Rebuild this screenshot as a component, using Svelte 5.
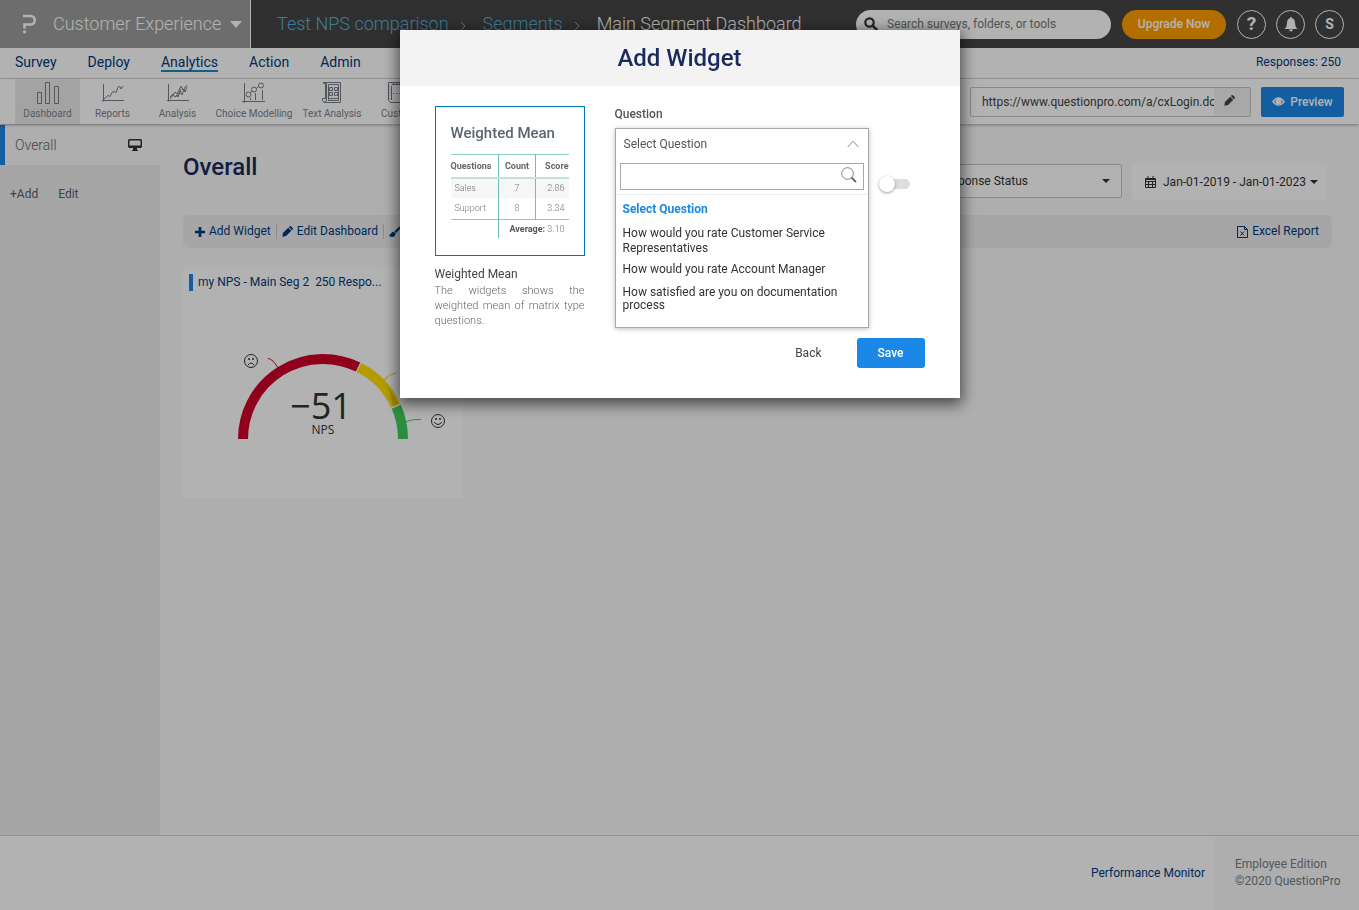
<script>
  const navItems = ['Survey', 'Deploy', 'Analytics', 'Action', 'Admin'];
  const questions = [
    'How would you rate Customer Service Representatives',
    'How would you rate Account Manager',
    'How satisfied are you on documentation process'
  ];
  let search = $state('');
  let enabled = $state(false);
  let url = $state('https://www.questionpro.com/a/cxLogin.do?tt=cx');
</script>

{#snippet pencil(size)}
  <svg class="solid" width={size} height={size} viewBox="0 0 12 12" aria-hidden="true">
    <path d="M1 7.600 6.800 1.800 10.200 5.200 4.400 11 0.400 11.600ZM7.500 1.100 8.300.3Q9-.2 9.700.4L11.600 2.300Q12.200 3 11.700 3.700L10.900 4.500Z" />
  </svg>
{/snippet}

<div class="page">
  <header class="top">
    <button class="product">
      <svg class="logo" width="14" height="20" viewBox="0 0 14 20" aria-hidden="true">
        <path d="M1 2H8.500A3.500 3.500 0 0 1 8.500 10.500H2.500V14.500" fill="none" stroke="currentColor" stroke-width="2.600" />
        <circle cx="2.500" cy="17.800" r="1.600" fill="currentColor" />
      </svg>
      <span>Customer Experience</span>
      <svg width="12" height="7" viewBox="0 0 12 7" aria-hidden="true"><path d="M0 0H12L6 7Z" fill="currentColor" /></svg>
    </button>
    <nav class="crumbs" aria-label="Breadcrumb">
      <a href="#nps">Test NPS comparison</a>
      <svg width="6" height="10" viewBox="0 0 6 10" aria-hidden="true"><path d="M1 1 5 5 1 9" /></svg>
      <a href="#segments">Segments</a>
      <svg width="6" height="10" viewBox="0 0 6 10" aria-hidden="true"><path d="M1 1 5 5 1 9" /></svg>
      <span>Main Segment Dashboard</span>
    </nav>
    <label class="search">
      <svg width="14" height="14" viewBox="0 0 14 14" aria-hidden="true">
        <circle cx="5.500" cy="5.500" r="4.200" fill="none" stroke="currentColor" stroke-width="2.200" />
        <path d="M8.600 8.600 12.600 12.600" stroke="currentColor" stroke-width="2.600" stroke-linecap="round" />
      </svg>
      <input type="search" placeholder="Search surveys, folders, or tools" aria-label="Search" />
    </label>
    <button class="upgrade">Upgrade Now</button>
    <button class="round help" aria-label="Help">?</button>
    <button class="round" aria-label="Notifications">
      <svg width="14" height="15" viewBox="0 0 14 15" aria-hidden="true">
        <path fill="currentColor" d="M7 0Q8 0 8 1.200Q11 2 11 6Q11 10 13.500 12H.5Q3 10 3 6Q3 2 6 1.200Q6 0 7 0ZM5 12.600H9Q8.800 14.500 7 14.500T5 12.600Z" />
      </svg>
    </button>
    <button class="round" aria-label="Account">S</button>
  </header>

  <nav class="main-nav">
    {#each navItems as item}
      <a href="#{item}" class:active={item === 'Analytics'}>{item}</a>
    {/each}
    <span class="responses">Responses: 250</span>
  </nav>

  <div class="tools">
    <a class="tool current" href="#dashboard">
      <svg width="26" height="24" viewBox="0 0 26 24" aria-hidden="true"><path d="M2.500 12.500H6.500V23.500H2.500ZM10.500 2.500H14.500V23.500H10.500ZM19.500 6.500H23.500V23.500H19.500Z" /></svg>
      <span>Dashboard</span>
    </a>
    <a class="tool" href="#reports">
      <svg width="26" height="24" viewBox="0 0 26 24" aria-hidden="true"><path d="M3.500 4V21.500M2 20.500H24M4 19 8 15.500 10 16.500 12 12.500 14 11.500 16 12.500 18 7 20 6.500 21 9 23 6" /></svg>
      <span>Reports</span>
    </a>
    <a class="tool" href="#analysis">
      <svg width="26" height="24" viewBox="0 0 26 24" aria-hidden="true"><path d="M3.500 4V21.500M2 20.500H24M5 19 8 15 10 12 12 14 16 6 18 10 22 5M5 17 8 14 10 17 13 15 15 11 17 15 19 9 20 12 22 7M11 15 13 17 16 9" /></svg>
      <span>Analysis</span>
    </a>
    <a class="tool choice" href="#choice">
      <svg width="26" height="24" viewBox="0 0 26 24" aria-hidden="true"><path d="M3.500 3V23M1 21.500H24M9.500 18V20M14.500 13V20M21.500 10V20M9.500 12.500 11.500 11M15 9 18 6" /><circle cx="7.500" cy="14.500" r="2.500" /><circle cx="13" cy="9.500" r="2.500" /><circle cx="20" cy="5.500" r="2.500" /></svg>
      <span>Choice Modelling</span>
    </a>
    <a class="tool text" href="#text">
      <svg width="26" height="24" viewBox="0 0 26 24" aria-hidden="true"><path d="M7.500 2.500H21.500V22.500H6Q3.500 22.500 3.500 20V18.500H6.500V3Q4 4 4 2.500H7.500V20Q7.500 22 5.500 22M9.500 4.500H19.500V20.500H9.500ZM10.500 7.500H13.500V10.500H10.500ZM15.500 7.500H18.500V10.500H15.500ZM10.500 12.500H13.500V15.500H10.500ZM15.500 12.500H18.500V15.500H15.500ZM10 18.500H19" /></svg>
      <span>Text Analysis</span>
    </a>
    <a class="tool" href="#custom">
      <svg width="26" height="24" viewBox="0 0 26 24" aria-hidden="true"><path d="M2.500 2.500H24.500V22.500H4.500L2.500 20.500V2.500M5.500 4.500H22M5.500 6V20" /><path stroke-dasharray="1 2" d="M3 6V20M7 13.500H20M7 3.500H23" /></svg>
      <span>Custom</span>
    </a>
    <div class="link-box">
      <input aria-label="Survey link" bind:value={url} />
      <button aria-label="Edit link">{@render pencil(11)}</button>
    </div>
    <button class="preview">
      <svg width="13" height="9" viewBox="0 0 12 8" aria-hidden="true"><path fill="currentColor" fill-rule="evenodd" d="M0 4Q6-4 12 4Q6 12 0 4ZM2 4Q3 6.200 6 6.600Q9 6.200 10 4Q9 2.300 8 1.900A2.800 2.800 0 1 1 4 1.900Q3 2.300 2 4Z" /></svg>
      Preview
    </button>
  </div>

  <div class="body">
    <aside>
      <a class="side-current" href="#overall">
        <span>Overall</span>
        <svg width="14" height="12" viewBox="0 0 14 12" aria-hidden="true"><path fill="currentColor" fill-rule="evenodd" d="M1 0H13L14 1V8L13 9H9V11H10V12H4V11H5V9H1L0 8V1ZM1.500 1.500V6.500H12.500V1.500Z" /></svg>
      </a>
      <div class="side-actions"><a href="#add">+Add</a><a href="#edit">Edit</a></div>
    </aside>

    <main>
      <div class="title-row">
        <h1>Overall</h1>
        <button class="status">Response Status <i class="caret"></i></button>
        <button class="dates">
          <svg width="11" height="12" viewBox="0 0 11 12" aria-hidden="true"><path fill="none" stroke="currentColor" d="M.5 2.500H10.500V11.500H.5ZM.5 3.500H10.500M.5 5.500H10.500M.5 8.500H10.500M3.500 5V11M7.500 5V11M3 0V3M8 0V3" /></svg>
          <span>Jan-01-2019 - Jan-01-2023</span> <i class="caret"></i>
        </button>
      </div>

      <div class="actions">
        <button><svg class="solid" width="10" height="10" viewBox="0 0 10 10" aria-hidden="true"><path d="M3.700 0H6.300V3.700H10V6.300H6.300V10H3.700V6.300H0V3.700H3.700Z" /></svg>Add Widget</button>
        <button>{@render pencil(11)}Edit Dashboard</button>
        <button><svg class="solid" width="12" height="11" viewBox="0 0 12 11" aria-hidden="true"><path d="M11.600.3Q12.400 1 11.500 2.300L7.300 7 5.500 5.300 10.300.8Q11 0 11.600.3ZM5 5.800 6.700 7.500Q6.500 11 2.800 11 .7 11 0 8.700 1.300 9 2 7.500 3 5.500 5 5.800Z" /></svg>Theme</button>
        <button class="excel"><svg width="11" height="12" viewBox="0 0 11 12" aria-hidden="true"><path fill="none" stroke="currentColor" d="M.5.5H7.500L10.500 3.500V11.500H.5ZM7.500.5V3.500H10.500M3.500 5.500 7 9.500M7 5.500 3.500 9.500" /></svg>Excel Report</button>
      </div>

      <section class="card">
        <h2>my NPS - Main Seg 2&nbsp; 250 Respo...</h2>
        <svg class="gauge" viewBox="0 0 280 200" role="img" aria-label="NPS −51">
          <g fill="none" stroke-width="10">
            <path stroke="#cc0029" d="M60 138A80 80 0 0 1 175 66" />
            <path stroke="#ffe100" d="M176 66.500A80 80 0 0 1 212.700 104.500" />
            <path stroke="#3ecb5b" d="M213.300 105.800A80 80 0 0 1 220 138" />
          </g>
          <path fill="#e8bd00" d="M206 87 215.600 103 210 105.500Z" />
          <g fill="none" stroke-width="1">
            <path stroke="#cc0029" d="M85 57.500Q90 58 95 67" />
            <path stroke="#e5c500" d="M201 79Q206 73 213 72" />
            <path stroke="#3ecb5b" d="M223 120.500Q230 118 238 118.500" />
            <g stroke="#333">
              <circle cx="68" cy="60" r="6.500" /><path d="M65 64Q68 60 71 64" />
              <circle cx="255" cy="120" r="6.500" /><path d="M251 121Q255 126 259 121" />
            </g>
          </g>
          <g fill="#333"><circle cx="66" cy="58" r="1" /><circle cx="70" cy="58" r="1" /><circle cx="253" cy="118" r="1" /><circle cx="257" cy="118" r="1" /></g>
          <text class="score" x="138" y="118">−51</text>
          <text class="unit" x="140" y="133">NPS</text>
        </svg>
      </section>
    </main>
  </div>

  <footer>
    <a href="#monitor">Performance Monitor</a>
    <div>Employee Edition<br />©2020 QuestionPro</div>
  </footer>
</div>

<div class="overlay">
  <div class="modal" role="dialog" aria-modal="true" aria-labelledby="modal-title">
    <h2 id="modal-title">Add Widget</h2>
    <div class="modal-body">
      <div class="widget">
        <div class="thumb">
          <h3>Weighted Mean</h3>
          <table>
            <thead><tr><th>Questions</th><th>Count</th><th>Score</th></tr></thead>
            <tbody>
              <tr class="shade"><td>Sales</td><td>7</td><td>2.86</td></tr>
              <tr><td>Support</td><td>8</td><td>3.34</td></tr>
            </tbody>
            <tfoot><tr><td></td><td colspan="2"><b>Average:</b> 3.10</td></tr></tfoot>
          </table>
        </div>
        <h4>Weighted Mean</h4>
        <p>The widgets shows the weighted mean of matrix type questions.</p>
      </div>
      <div class="form">
        <label class="caption" for="question">Question</label>
        <div class="field">
          <div class="dropdown">
            <button id="question" class="chosen" aria-expanded="true">
              Select Question
              <svg width="12" height="8" viewBox="0 0 12 8" aria-hidden="true"><path d="M.7 7 6 1.200 11.300 7" fill="none" stroke="#888" /></svg>
            </button>
            <label class="find">
              <input bind:value={search} aria-label="Search questions" />
              <svg width="16" height="16" viewBox="0 0 16 16" aria-hidden="true"><circle cx="6.500" cy="6.500" r="5.800" fill="none" stroke="#777" stroke-width=".9" /><path d="M10.500 10.500 15 15" stroke="#444" stroke-width="1.600" /></svg>
            </label>
            <ul>
              <li><button class="picked">Select Question</button></li>
              {#each questions as q}
                <li><button>{q}</button></li>
              {/each}
            </ul>
          </div>
          <label class="switch">
            <input type="checkbox" bind:checked={enabled} aria-label="Enable option" />
            <span></span>
          </label>
        </div>
        <div class="buttons">
          <button class="back">Back</button>
          <button class="save">Save</button>
        </div>
      </div>
    </div>
  </div>
</div>

<style>
  :global(body) { margin: 0; }
  :global(*) { box-sizing: border-box; }
  .page, .overlay { font-family: Roboto, "Open Sans", sans-serif; font-size: 12px; line-height: 16px; }
  button, input { font: inherit; color: inherit; border: 0; background: none; padding: 0; margin: 0; }
  a { color: inherit; text-decoration: none; }
  h1, h2, h3, h4, p, ul { margin: 0; padding: 0; font-weight: 400; }
  svg { flex: none; }
  .solid { fill: currentColor; }
  .page { min-height: 100vh; display: flex; flex-direction: column; background: #f9f9f9; color: #003a7d; }

  .top { display: flex; align-items: center; height: 48px; padding-right: 15px; background: #454545; color: #fff; }
  .product { display: flex; align-items: center; align-self: stretch; width: 251px; padding: 0 8px 0 22px; background: #9d9d9d; border-right: 1px solid #fff; font-size: 18px; font-weight: 300; }
  .product .logo { margin-right: 17px; }
  .product span { flex: 1; text-align: left; }
  .crumbs { display: flex; align-items: center; flex: 1; margin-left: 26px; font-size: 18px; font-weight: 300; white-space: nowrap; }
  .crumbs a { color: #5eb1dc; }
  .crumbs svg { margin: 3px 17px 0 11px; fill: none; stroke: #aaa; }
  .search { display: flex; align-items: center; gap: 9px; width: 255px; height: 29px; padding: 0 14px 0 8px; border-radius: 15px; background: #fff; color: #333; }
  .search input { flex: 1; min-width: 0; outline: 0; }
  .search input::placeholder { color: #777; }
  .upgrade { width: 104px; height: 29px; margin: 0 0 0 11px; border-radius: 15px; background: #ff9f00; font-weight: 500; }
  .round { display: grid; place-items: center; width: 29px; height: 29px; margin-left: 10px; border: 1px solid #fff; border-radius: 50%; font-size: 14px; font-weight: 700; }
  .round.help { margin-left: 11px; font-size: 19px; }

  .main-nav { display: flex; align-items: center; gap: 31px; height: 31px; padding: 0 18px 2px 15px; background: #fff; border-bottom: 1px solid #d9d9d9; font-size: 14px; line-height: 16px; }
  .main-nav .active { border-bottom: 2px solid #1b87c0; margin-bottom: -2px; }
  .responses { margin-left: auto; font-size: 12px; }

  .tools { position: relative; display: flex; align-items: center; height: 45px; padding: 0 15px; background: #fff; box-shadow: 0 1px 3px #0005; color: #7d828a; }
  .tool { display: flex; flex-direction: column; align-items: center; align-self: stretch; width: 65px; padding-top: 1px; font-size: 10px; line-height: 20px; white-space: nowrap; }
  .tool svg { fill: none; stroke: #777d87; }
  .tool.current { background: #eaeaea; }
  .tool.choice { width: 88px; }
  .tool.text { width: 68px; }
  .link-box { display: flex; width: 281px; height: 30px; margin-left: auto; border: 1px solid #c5c5c5; border-radius: 2px; color: #444; }
  .link-box input { flex: 1; min-width: 0; padding: 0 0 0 11px; }
  .link-box button { width: 36px; padding-right: 6px; background: #f1f1f1; }
  .preview { display: flex; align-items: center; justify-content: center; gap: 5px; width: 83px; height: 30px; margin-left: 10px; border-radius: 2px; background: #1b87e6; color: #fff; font-weight: 500; }

  .body { flex: 1; display: flex; }
  aside { width: 160px; padding-top: 1px; background: #eee; }
  .side-current { display: flex; align-items: center; justify-content: space-between; height: 40px; padding: 0 18px 0 10px; border-left: 5px solid #1b87e6; background: #fafafa; color: #666; font-size: 14px; font-weight: 300; }
  .side-current svg { color: #333; }
  .side-actions { display: flex; gap: 20px; padding: 21px 10px; color: #555f70; }
  main { flex: 1; padding: 40px 27px 0 23px; }
  .title-row { display: flex; align-items: flex-start; height: 51px; padding-right: 5px; color: #333; }
  h1 { flex: 1; margin-top: -11px; color: #1b2a5c; font-size: 24px; line-height: 28px; font-weight: 500; }
  .status { display: flex; align-items: center; justify-content: space-between; width: 196px; height: 34px; padding: 0 11px; border: 1px solid #c5c5c5; border-radius: 2px; background: #fff; }
  .dates { display: flex; align-items: center; width: 195px; height: 36px; margin-left: 10px; padding: 0 13px; border-radius: 3px; background: #fff; white-space: nowrap; }
  .dates span { margin: 0 4px 0 7px; }
  .caret { border: 4px solid transparent; border-top-color: currentColor; border-bottom: 0; }
  .actions { display: flex; align-items: center; height: 33px; padding: 0 13px 0 7px; border-radius: 6px; background: #eee; line-height: 15px; }
  .actions button { display: flex; align-items: center; gap: 4px; padding: 0 5px; border-right: 1px solid #c8c8c8; }
  .actions .excel { margin-left: auto; padding-right: 0; border: 0; }
  .card { width: 280px; height: 230px; margin-top: 20px; padding-top: 6px; background: #fff; }
  .card h2 { margin-left: 6px; padding-left: 5px; border-left: 4px solid #1b87e6; font-size: 12px; line-height: 17px; }
  .gauge { display: block; width: 280px; margin-top: 10px; }
  text { font-family: "Open Sans", sans-serif; text-anchor: middle; fill: #333; }
  .score { font-size: 36px; }
  .unit { font-size: 12px; }

  footer { display: flex; align-items: center; justify-content: flex-end; height: 75px; background: #fff; border-top: 1px solid #d5d5d5; }
  footer div { align-self: stretch; width: 144px; margin-left: 10px; padding: 20px 0 0 20px; background: #f9f9f9; color: #777d87; line-height: 17px; }

  .overlay { position: fixed; inset: 0; display: flex; justify-content: center; align-items: flex-start; padding: 30px; background: rgba(0, 0, 0, 0.3); color: #444; }
  .modal { width: 560px; background: #fff; box-shadow: 0 4px 14px 2px rgba(0, 0, 0, 0.6); }
  .modal > h2 { background: #f3f3f3; color: #1b2a5c; font-size: 24px; line-height: 56px; font-weight: 500; text-align: center; }
  .modal-body { display: flex; gap: 30px; padding: 20px 35px 30px; }
  .widget { width: 150px; flex: none; }
  .thumb { height: 150px; padding: 17px 15px; border: 1px solid #0077b5; }
  .thumb h3 { color: #5b6470; font-size: 15px; line-height: 19px; font-weight: 500; }
  table { width: 100%; margin-top: 11px; border-collapse: collapse; table-layout: fixed; font-size: 9px; line-height: 12px; color: #777; border-top: 1px solid #8acbc4; }
  th, td { height: 22px; padding: 0; text-align: center; font-weight: 300; }
  th { height: 23px; color: #666; font-weight: 700; border-bottom: 2px solid #bfe4e0; }
  th:nth-child(1) { width: 48px; text-align: left; }
  th:nth-child(2) { width: 37px; }
  th:nth-child(3) { text-align: right; }
  td:first-child { padding-left: 4px; text-align: left; }
  td:last-child { padding-right: 4px; text-align: right; }
  th:first-child, td:first-child { border-right: 1px solid #6fbfb8; }
  th:nth-child(2), tbody td:nth-child(2) { border-right: 1px solid #6fbfb8; }
  tfoot { border-top: 1px solid #8acbc4; }
  tfoot td { height: 18px; }
  b { color: #555; font-weight: 700; }
  .shade { background: #f6f6f6; }
  .shade td { height: 20px; }
  h4 { margin-top: 10px; font-size: 12px; line-height: 17px; }
  .widget p { font-size: 11px; line-height: 15px; font-weight: 300; text-align: justify; color: #666; }
  .form { flex: 1; display: flex; flex-direction: column; }
  .caption { font-weight: 500; color: #555; }
  .field { display: flex; align-items: flex-start; gap: 10px; margin-top: 6px; }
  .dropdown { width: 254px; height: 200px; flex: none; border: 1px solid #a5a8ab; background: #fff; box-shadow: 0 1px 5px #0004; }
  .chosen { display: flex; align-items: center; justify-content: space-between; width: 100%; height: 30px; padding: 0 9px 0 8px; color: #555; }
  .find { display: flex; align-items: center; height: 27px; margin: 4px 4px; padding: 0 6px 3px 0; border: 1px solid #a5a8ab; }
  .find input { flex: 1; min-width: 0; outline: 0; }
  ul { list-style: none; padding: 3px 7px 0; border-top: 1px solid #eee; }
  li button { display: block; padding: 3px 0; text-align: left; line-height: 15px; color: #333; }
  li:last-child button { padding-top: 6px; line-height: 13px; }
  li .picked { padding: 4px 0 6px; font-weight: 700; color: #1b87e6; }
  .switch { position: relative; margin-top: 48px; width: 32px; height: 16px; }
  .switch input { appearance: none; display: block; width: 31px; height: 10px; margin: 3px 0; border-radius: 5px; background: #ddd; }
  .switch span { position: absolute; left: 0; top: 0; width: 16px; height: 16px; border-radius: 50%; background: #fff; box-shadow: 0 1px 3px #0006; }
  .buttons { display: flex; justify-content: flex-end; gap: 35px; margin-top: 10px; }
  .buttons button { height: 30px; }
  .save { width: 68px; border-radius: 3px; background: #1b87e6; color: #fff; font-weight: 500; }
</style>
